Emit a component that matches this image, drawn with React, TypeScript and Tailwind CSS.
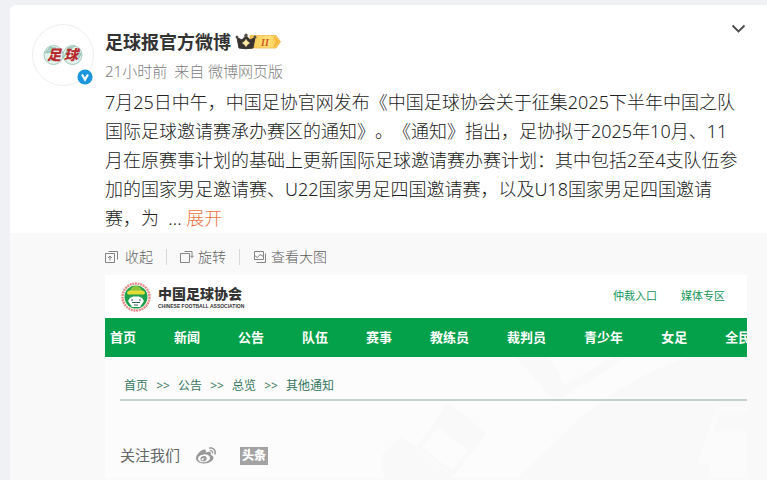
import React from "react";
import { FaWeibo } from "react-icons/fa";

const navItems = [
  "首页",
  "新闻",
  "公告",
  "队伍",
  "赛事",
  "教练员",
  "裁判员",
  "青少年",
  "女足",
  "全民",
];

const crumbs = ["首页", "公告", "总览", "其他通知"];

const Avatar = () => (
  <div className="relative w-[62px] h-[62px] shrink-0 rounded-full border border-[#efefef] bg-white">
    <svg viewBox="0 0 60 60" className="w-full h-full" aria-label="足球报">
      <circle cx="20.500" cy="30" r="9.500" fill="#e4f1ec" stroke="#a3c9be" />
      <circle cx="39.500" cy="30" r="9.500" fill="#e4f1ec" stroke="#a3c9be" />
      <path
        d="M12 28l5-6 6 1-5 4zM31 32l4-9 7-2M15 36l8-2M43 23l5 6-3 6"
        fill="#a9d3c5"
        stroke="#8dbcae"
        strokeWidth="0.8"
      />
      <g
        fill="#b92a2c"
        fontFamily="'Noto Sans CJK SC', sans-serif"
        fontSize="14"
        fontStyle="italic"
        fontWeight="900"
        textAnchor="middle"
      >
        <text x="21" y="35">足</text>
        <text x="38" y="35">球</text>
      </g>
    </svg>
    {/* Verified badge */}
    <svg viewBox="0 0 16 16" className="absolute right-0 bottom-0 w-4 h-4">
      <circle cx="8" cy="8" r="7.600" fill="#1c96e0" />
      <path d="M5 5.500L8 10.500L11 5.500" fill="none" stroke="#fff" strokeWidth="2.200" />
    </svg>
  </div>
);

const VipBadge = () => (
  <svg viewBox="0 0 46 18" className="w-[46px] h-[18px]" aria-label="VIP II">
    <defs>
      <linearGradient id="vip" x1="0" x2="1">
        <stop offset="0" stopColor="#f3c54d" />
        <stop offset="0.6" stopColor="#ffe37c" />
        <stop offset="1" stopColor="#f9bd3c" />
      </linearGradient>
    </defs>
    <path d="M15 2.500H41L45.500 8.800L41 15H15Z" fill="url(#vip)" stroke="#f1b64a" strokeWidth="0.8" />
    <path d="M39 4L42.500 8.800L39 13.600" fill="none" stroke="#f3ac35" strokeWidth="1.200" />
    <path
      d="M2 4.500L7 7L11 2.500L15 7L20 4.500L18 15Q11 16.500 4 15Z"
      fill="#38332f"
      stroke="#38332f"
      strokeLinejoin="round"
    />
    <g fill="#5b5048">
      <circle cx="2" cy="4" r="1.500" />
      <circle cx="11" cy="2.200" r="1.600" />
      <circle cx="20" cy="4" r="1.500" />
    </g>
    <path
      d="M11 6.500q1 2.200 3.500 3.500q-2.500 1.300-3.500 3.500q-1-2.200-3.500-3.500q2.500-1.300 3.500-3.500z"
      fill="#ffe9a3"
      stroke="#ffe9a3"
      strokeWidth="0.8"
    />
    <text
      x="30"
      y="12.500"
      fill="#d3581f"
      fontFamily="'Liberation Serif', serif"
      fontSize="10"
      fontStyle="italic"
      fontWeight="700"
      textAnchor="middle"
    >
      II
    </text>
  </svg>
);

const CollapseIcon = () => (
  <svg viewBox="0 0 14 14" className="w-3.5 h-3.5" fill="none" stroke="#858585">
    <path d="M0.500 3.500h9v9h-9zM3.500 1.500h9v8M5 10.500V6M3 8l2-2 2 2" />
  </svg>
);

const RotateIcon = () => (
  <svg viewBox="0 0 14 14" className="w-3.5 h-3.5" fill="none" stroke="#858585">
    <path d="M0.500 3.500h9v9h-9zM4.500 1.500h7.500v6M10 5.500l2 2 2-2" />
  </svg>
);

const ViewIcon = () => (
  <svg viewBox="0 0 14 14" className="w-3.5 h-3.5" fill="none" stroke="#858585">
    <path d="M1.500 1.500h9v8h-9zM1.500 5.500l3 2 2.500-3 3.500 2M3.500 12.500h9v-9" />
  </svg>
);

const AssociationLogo = () => (
  <svg viewBox="0 0 32 32" className="w-8 h-8" aria-hidden="true">
    <circle cx="16" cy="16" r="13.500" fill="#fff" stroke="#e98a88" strokeWidth="2.400" strokeDasharray="2 0.7" />
    <circle cx="16" cy="16" r="11.500" fill="#1fa04a" />
    <path d="M10 10.500Q11 5 16 5T22 10.500Z" fill="#8ac53c" />
    <path d="M7 12Q7 10 10 9.500H22Q25 10 25 12L24 13.500H8Z" fill="#e3dc37" />
    <path d="M10 17l3-1.500h6l3 1.500 2 3-2 3-2 3h-8l-2-3-2-3z" fill="#fff" />
    <path d="M11 19h2M19 19h2M12 21.500h8M14 24h4" fill="none" stroke="#35664a" strokeWidth="1.200" />
  </svg>
);

const Watermark = () => (
  <svg
    viewBox="0 0 642 121"
    preserveAspectRatio="xMaxYMin slice"
    className="absolute inset-0 w-full h-full"
    fill="#f9f9f9"
    aria-hidden="true"
  >
    <path d="M412 0h32l16 28 48-28h15l-73 45z" />
    <path d="M585 0h57v121H412l64-60q50-43 109-61z" />
    <path d="M342 46l40 30-34 43-36-29zM333 70l-16 20 30 24 17-20z" fillRule="evenodd" />
    <path d="M296 80l14 10 38 31h-69l-2-23z" />
    <path d="M612 50h30v6h-28l-5 18h33v47h-38v-14h-12z" fill="#fbfbfb" />
  </svg>
);

const ArticlePreview = () => (
  <div className="overflow-hidden bg-white">
    <header className="flex h-[43px] items-center justify-between pl-[15px] pr-[22px]">
      <div className="flex items-center gap-1.5">
        <AssociationLogo />
        <div className="flex flex-col text-[#343434]">
          <span className="text-[14px] leading-[18px] font-black">中国足球协会</span>
          <span className="font-['Liberation_Sans',sans-serif] text-[5px] leading-[6px] font-bold whitespace-nowrap">
            CHINESE FOOTBALL ASSOCIATION
          </span>
        </div>
      </div>
      <div className="flex gap-6 text-[11px] text-[#16965a]">
        <a href="#arbitration">仲裁入口</a>
        <a href="#media">媒体专区</a>
      </div>
    </header>
    <nav className="flex h-[39px] items-center gap-[38px] overflow-hidden bg-[#05a14a] pl-[5px] text-[13px] font-bold whitespace-nowrap text-white">
      {navItems.map((item) => (
        <a key={item} href="#nav" className="shrink-0">
          {item}
        </a>
      ))}
    </nav>
    <div className="relative bg-[#fcfcfc]">
      <Watermark />
      <div className="relative pl-[15px]">
        <div className="flex h-11 items-center gap-[7px] border-b-2 border-[#c3d0cc] pt-4 pl-1 text-xs text-[#37775f]">
          {crumbs.map((crumb, i) => (
            <React.Fragment key={crumb}>
              {i > 0 && <span className="w-4 text-center">&gt;&gt;</span>}
              <a href="#crumb">{crumb}</a>
            </React.Fragment>
          ))}
        </div>
        <div className="flex h-[77px] items-center pt-8 text-[#666]">
          <span className="text-[15px]">关注我们</span>
          <a href="#weibo" aria-label="微博" className="ml-4">
            <FaWeibo className="h-5 w-5 text-[#999]" />
          </a>
          <a
            href="#toutiao"
            className="ml-6 bg-[#a3a3a3] px-0.5 text-xs leading-[18px] font-black text-white"
          >
            头条
          </a>
        </div>
      </div>
    </div>
  </div>
);

const App = () => {
  return (
    <div className="min-h-screen bg-[#f0f1f4] pt-[5px] pl-2.5 font-['Noto_Sans','Noto_Sans_CJK_SC',sans-serif] [text-spacing-trim:space-all]">
      <article className="rounded-tl-md bg-white" lang="zh-CN">
        <div className="flex gap-[11px] pt-[19px] pr-5 pl-[22px]">
          <Avatar />
          <div className="min-w-0 flex-1">
            <div className="flex justify-between">
              <div className="flex items-center gap-1 pt-1">
                <a href="#user" className="text-lg leading-7 font-bold text-[#333]">
                  足球报官方微博
                </a>
                <VipBadge />
              </div>
              <button type="button" aria-label="更多" className="h-[9px] w-[17px]">
                <svg viewBox="0 0 17 9" fill="none" stroke="#4a4a4a" strokeWidth="1.800">
                  <path d="M2.500 1.500L8.500 7.500L14.500 1.500" />
                </svg>
              </button>
            </div>
            <div className="flex gap-[7px] text-[15px] leading-[30px] font-light text-[#808080]">
              <span>21小时前</span>
              <span>
                来自 <a href="#source">微博网页版</a>
              </span>
            </div>
            <p className="pt-0.5 text-lg leading-[29px] font-light whitespace-nowrap text-[#222]">
              7月25日中午，中国足协官网发布《中国足球协会关于征集2025下半年中国之队
              <br />
              国际足球邀请赛承办赛区的通知》。《通知》指出，足协拟于2025年10月、11
              <br />
              月在原赛事计划的基础上更新国际足球邀请赛办赛计划：其中包括2至4支队伍参
              <br />
              加的国家男足邀请赛、U22国家男足四国邀请赛，以及U18国家男足四国邀请
              <br />
              赛，为 &nbsp;...{" "}
              <a href="#more" className="text-[#eb7340]">
                展开
              </a>
            </p>
          </div>
        </div>

        {/* Attached picture with its toolbar */}
        <div className="bg-[#f9f9f9] pr-5 pb-1 pl-[95px]">
          <div className="flex h-[42px] items-center pt-1.5 text-sm font-light text-[#606060]">
            <button type="button" className="flex items-center gap-1.5">
              <CollapseIcon />
              收起
            </button>
            <span className="mx-[13px] h-4 w-px bg-[#d9d9d9]" />
            <button type="button" className="flex items-center gap-1">
              <RotateIcon />
              旋转
            </button>
            <span className="mx-[13px] h-4 w-px bg-[#d9d9d9]" />
            <button type="button" className="flex items-center gap-1">
              <ViewIcon />
              查看大图
            </button>
          </div>
          <ArticlePreview />
        </div>
      </article>
    </div>
  );
};

export default App;
